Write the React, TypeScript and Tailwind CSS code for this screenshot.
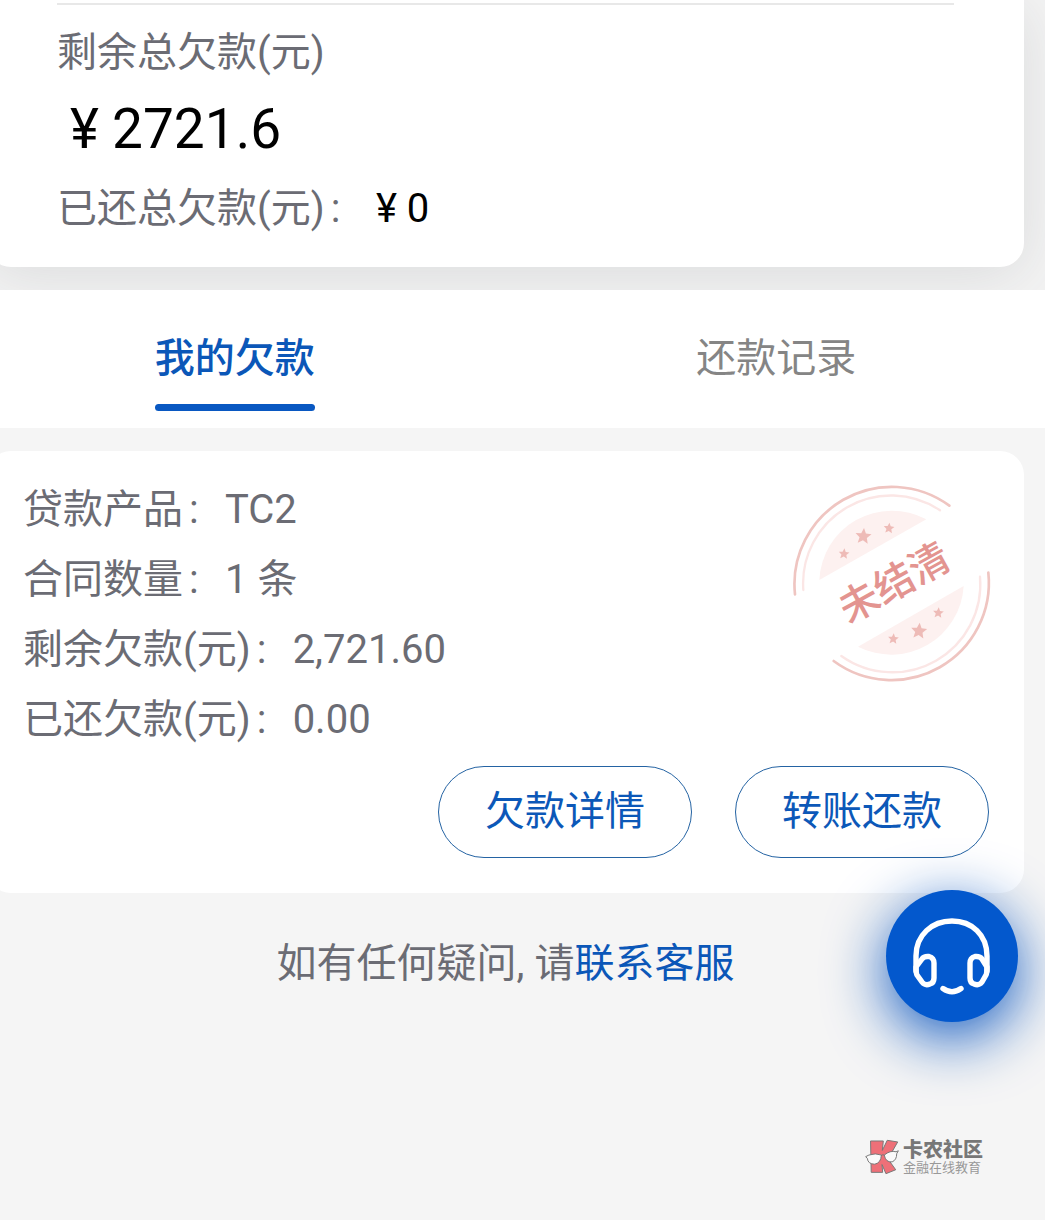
import React from "react";

const STAR = "M0-24 7-8 24-7 11 5 15 22 0 13-15 22-11 5-24-7-7-8Z";

function Star({ x, y, size }: { x: number; y: number; size: number }) {
  return <path d={STAR} fill="#eebbb7" transform={`translate(${x} ${y}) rotate(5) scale(${size})`} />;
}

function UnsettledStamp() {
  return (
    <svg viewBox="28 39 600 600" className="size-50 overflow-visible" role="img" aria-label="未结清">
      <g fill="none" strokeLinecap="round">
        <path d="M46 373A292 292 0 0 1 509 107" stroke="#efc5c1" strokeWidth="8" />
        <path d="M626 308A292 292 0 0 1 162 573" stroke="#efc5c1" strokeWidth="8" />
        <path d="M71 360A264 264 0 0 1 481 121" stroke="#fbe6e5" strokeWidth="7" />
        <path d="M601 320A264 264 0 0 1 185 558" stroke="#fbe6e5" strokeWidth="7" />
      </g>
      <path d="M119 330A218 218 0 0 1 440 148Z" fill="#fdf1f0" />
      <path d="M552 348A218 218 0 0 1 235 530Z" fill="#fdf1f0" />
      <Star x={251} y={198} size={1} />
      <Star x={193} y={251} size={0.67} />
      <Star x={328} y={174} size={0.67} />
      <Star x={418} y={482} size={1} />
      <Star x={341} y={506} size={0.67} />
      <Star x={476} y={428} size={0.67} />
      <text
        x="0"
        y="43"
        textAnchor="middle"
        fontSize="120"
        transform="translate(343 338) rotate(-29)"
        className="fill-[#e39490] font-medium"
      >
        未结清
      </text>
    </svg>
  );
}

function HeadsetIcon() {
  return (
    <svg viewBox="0 0 132 132" className="size-full" fill="none" stroke="#fff" strokeWidth="5.4" strokeLinecap="round" strokeLinejoin="round" aria-hidden="true">
      <path d="M30 81V66C30 45 46 31 66 31S101 45 101 66V81" />
      <path d="M30 77 36 69Q38 66 43 66.500Q48 68 48 73V88Q48 93 44 94Q39 96 36 92L31 85Q30 83 30 77Z" />
      <path d="M101 77 96 69Q94 66 89 66.500Q84 68 84 73V88Q84 93 88 94Q93 96 96 92L100 85Q101 83 101 77Z" />
      <path d="M57 98.500Q66 105 75 98.500" />
    </svg>
  );
}

function CommunityLogo() {
  return (
    <svg viewBox="44 60 104 110" className="h-9 w-[34px]" stroke="#777" strokeWidth="3" strokeLinejoin="round" aria-hidden="true">
      <path d="M61 66H100L97 95 112 64 144 69 124 104 117 125 138 154 108 166 96 138 98 162H63Z" fill="#ee7078" />
      <path d="M46 114 56 109Q76 102 94 109Q93 133 74 137Q53 137 51 119Z" fill="#fafafa" />
      <path d="M103 109Q121 94 139 99L146 96 141 105Q141 124 127 130Q107 132 103 109Z" fill="#fafafa" />
      <path d="M93 111Q99 105 104 110" fill="none" />
    </svg>
  );
}

const details = [
  ["贷款产品", "TC2"],
  ["合同数量", "1 条"],
  ["剩余欠款(元)", "2,721.60"],
  ["已还欠款(元)", "0.00"],
];

function Colon() {
  return <span className="inline-block w-[1em] pl-1.5">:</span>;
}

function Yuan() {
  return <span className="inline-block w-[1em] text-center">¥</span>;
}

function OutlineButton({ children }: { children: React.ReactNode }) {
  return (
    <button type="button" className="rounded-full border border-[#2463a3] px-[46px] py-[15px] leading-[60px] text-[#0c58b8]">
      {children}
    </button>
  );
}

export default function App() {
  return (
    <div
      lang="zh-CN"
      className="relative overflow-hidden bg-white font-[Roboto,'Noto_Sans_CJK_SC',sans-serif] text-[40px] text-[#6b6c74]"
    >
      <main className="-mr-0.5 -ml-9 bg-[#f5f5f5] pb-[226px]">
        <section className="overflow-hidden bg-[#f3f3f3] px-[23px] pb-[23px]">
          <div className="rounded-b-3xl bg-white px-[70px] pt-[3px] pb-7 shadow-[0_8px_60px_rgba(60,70,80,0.13)]">
            <hr className="mb-[18px] border-t-2 border-[#e8e8e8]" />
            <p className="leading-[60px]">剩余总欠款(元)</p>
            <p className="pt-1.5 pb-2.5 text-[55px] leading-[80px] text-black">
              <Yuan />
              2721.6
            </p>
            <p className="flex gap-0.5 leading-[60px]">
              <span>
                已还总欠款(元)
                <Colon />
              </span>
              <span className="text-black">
                <Yuan />0
              </span>
            </p>
          </div>
        </section>

        <div role="tablist" className="grid grid-cols-2 justify-items-center bg-white pt-[39px] pb-[17px]">
          <button type="button" role="tab" aria-selected="true" className="flex flex-col font-medium text-[#0b57b8]">
            <span className="leading-[60px]">我的欠款</span>
            <span className="mt-[15px] h-[7px] w-full rounded-full bg-[#0958c2]" />
          </button>
          <button type="button" role="tab" aria-selected="false" className="self-start leading-[60px] text-[#858585]">
            还款记录
          </button>
        </div>

        <section className="mx-[23px] mt-[23px] rounded-3xl bg-white pt-6 pr-[35px] pb-[35px] pl-9">
          <div className="flex items-start justify-between">
            <dl>
              {details.map(([label, value]) => (
                <div key={label} className="flex gap-0.5 leading-[70px]">
                  <dt>
                    {label}
                    <Colon />
                  </dt>
                  <dd>{value}</dd>
                </div>
              ))}
            </dl>
            <div className="mt-2">
              <UnsettledStamp />
            </div>
          </div>
          <div className="mt-[11px] flex justify-end gap-[43px]">
            <OutlineButton>欠款详情</OutlineButton>
            <OutlineButton>转账还款</OutlineButton>
          </div>
        </section>

        <p className="mt-[41px] text-center leading-[60px]">
          如有任何疑问, 请<a href="#contact" className="text-[#0b57b8]">联系客服</a>
        </p>
      </main>

      <button
        type="button"
        aria-label="联系客服"
        className="absolute top-[890px] right-[27px] size-33 rounded-full bg-[#0358cd] shadow-[0_16px_60px_rgba(6,82,190,0.95)]"
      >
        <HeadsetIcon />
      </button>

      <div className="absolute right-[62px] bottom-11 flex items-center gap-1 text-[#777]">
        <CommunityLogo />
        <div className="pt-0.5">
          <p className="text-[20px] leading-5 font-black">卡农社区</p>
          <p className="text-[13px] leading-4 text-[#999]">金融在线教育</p>
        </div>
      </div>
    </div>
  );
}
